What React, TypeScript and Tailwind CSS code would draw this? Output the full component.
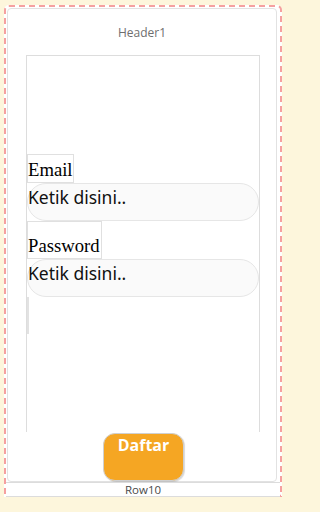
import React from 'react';

const sans = { fontFamily: '"Open Sans", "Noto Sans", sans-serif' };

function Label({ text, width, height }: { text: string; width: string; height: string }) {
    return (
        <div
            className={`flex items-end border border-[#e0e0e0] pb-[2px] text-[18.67px] leading-[21px] text-black ${width} ${height}`}
            style={{ fontFamily: '"Liberation Serif", "Times New Roman", serif' }}
        >
            {text}
        </div>
    );
}

function Field() {
    return (
        <div
            className="h-[38px] w-full rounded-full border border-[#e6e6e6] bg-[#fafafa] pt-[1px] text-[17.5px] leading-[24px] text-[#111]"
            style={{ fontFamily: '"Noto Sans", "Open Sans", sans-serif' }}
        >
            Ketik disini..
        </div>
    );
}

export default function App() {
    return (
        <div className="h-[512px] w-full overflow-hidden bg-[#fdf6dc] pl-[4px] pt-[5px]">
            <div className="flex h-[492px] w-[278px] flex-col rounded-t-[5px] border-x-2 border-t-2 border-dashed border-[#f5a0a0] bg-white pt-px">
                {/* Card */}
                <div className="ml-px flex h-[474px] w-[270px] flex-col rounded-[4px] border border-[#e2e2e2]">
                    <div className="flex h-[46px] items-center justify-center pt-[1px] text-[12px] text-[#6e6e6e]" style={sans}>
                        Header1
                    </div>

                    {/* Form box */}
                    <div className="ml-[18px] flex h-[377px] w-[234px] flex-col border-x border-t border-[#dddddd] pt-[98px]">
                        <Label text="Email" width="w-[47px]" height="h-[29px]" />
                        <Field />
                        <Label text="Password" width="w-[75px]" height="h-[38px]" />
                        <Field />
                        <div className="h-[37px] w-[2px] bg-[#e2e2e2]" />
                    </div>

                    <div className="mt-px flex justify-center pl-[3px]">
                        <button
                            className="flex h-[48px] w-[81px] items-start justify-center rounded-[12px] border border-[#d0d0d0] bg-[#f5a623] pt-[1px] text-[16px] font-bold leading-[20px] text-white shadow-[1px_1px_1px_rgba(0,0,0,0.15)]"
                            style={sans}
                        >
                            Daftar
                        </button>
                    </div>
                </div>

                {/* Row10 strip */}
                <div
                    className="flex h-[15px] items-center justify-center border-y border-[#dcdcdc] text-[11.5px] leading-none text-[#4a4a4a]"
                    style={sans}
                >
                    Row10
                </div>
            </div>
        </div>
    );
}
